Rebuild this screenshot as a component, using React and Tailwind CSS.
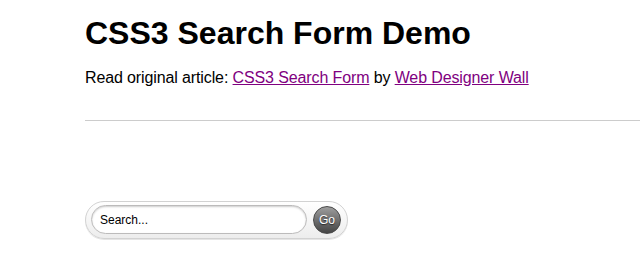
export default function App() {
  return (
    <div className="min-h-[278px] bg-white pl-[85px] pt-[15px] font-['Liberation_Sans',Arial,sans-serif] text-black">
      <h1 className="text-[32px] font-bold leading-[37px]">CSS3 Search Form Demo</h1>
      <p className="mt-[17px] text-[16px] leading-[18px] tracking-[-0.12px]">
        Read original article:{' '}
        <a href="#" className="text-[#800080] underline">CSS3 Search Form</a> by{' '}
        <a href="#" className="text-[#800080] underline">Web Designer Wall</a>
      </p>
      <hr className="mt-[33px] border-0 border-t border-[#cccccc]" />

      <form
        className="mt-[80px] inline-flex items-center gap-[6px] rounded-full border border-[#d2d2d2] bg-gradient-to-b from-white to-[#ededed] pb-[4px] pl-[5px] pr-[6px] pt-[3px] shadow-[0_1px_0_rgba(0,0,0,0.1)]"
        onSubmit={(e) => e.preventDefault()}
      >
        <input
          type="text"
          defaultValue="Search..."
          className="h-[29px] w-[216px] rounded-full border border-[#bcbbbb] bg-white pl-[8px] pr-[6px] text-[12px] text-black shadow-[inset_0_1px_2px_rgba(0,0,0,0.2)] outline-none"
        />
        <button
          type="submit"
          className="flex h-[28px] w-[28px] items-center justify-center rounded-full border border-[#494949] bg-gradient-to-b from-[#9e9e9e] to-[#454545] text-[12px] text-white [text-shadow:0_1px_1px_rgba(0,0,0,0.6)]"
        >
          Go
        </button>
      </form>
    </div>
  )
}
